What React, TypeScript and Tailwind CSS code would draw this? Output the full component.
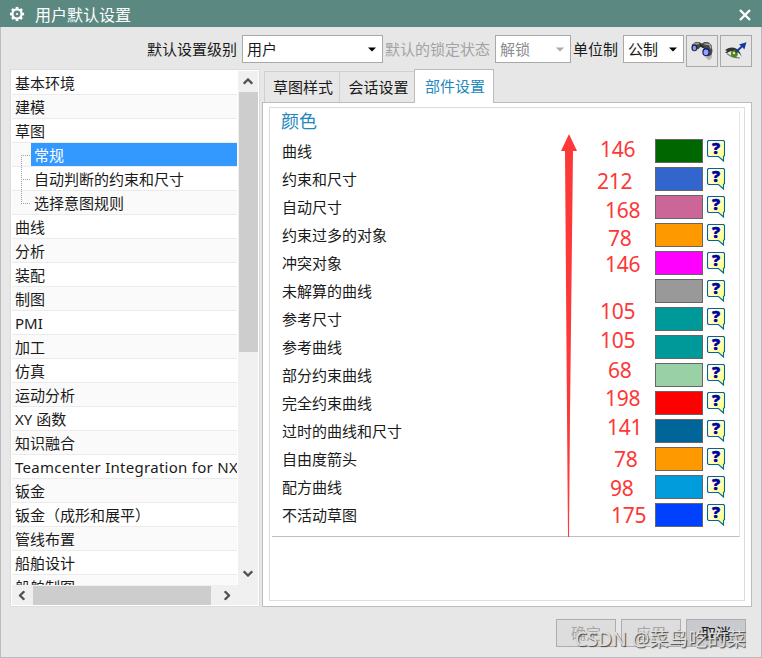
import React from "react";

const tree: { label: string; level?: number; selected?: boolean; wide?: boolean }[] = [
  { label: "基本环境" },
  { label: "建模" },
  { label: "草图" },
  { label: "常规", level: 1, selected: true },
  { label: "自动判断的约束和尺寸", level: 1 },
  { label: "选择意图规则", level: 1 },
  { label: "曲线" },
  { label: "分析" },
  { label: "装配" },
  { label: "制图" },
  { label: "PMI" },
  { label: "加工" },
  { label: "仿真" },
  { label: "运动分析" },
  { label: "XY 函数" },
  { label: "知识融合" },
  { label: "Teamcenter Integration for NX", wide: true },
  { label: "钣金" },
  { label: "钣金（成形和展平）" },
  { label: "管线布置" },
  { label: "船舶设计" },
  { label: "船舶制图" },
];

const colors = [
  { label: "曲线", swatch: "bg-[#006600]" },
  { label: "约束和尺寸", swatch: "bg-[#3366cc]" },
  { label: "自动尺寸", swatch: "bg-[#cc6699]" },
  { label: "约束过多的对象", swatch: "bg-[#ff9900]" },
  { label: "冲突对象", swatch: "bg-[#ff00ff]" },
  { label: "未解算的曲线", swatch: "bg-[#999999]" },
  { label: "参考尺寸", swatch: "bg-[#009999]" },
  { label: "参考曲线", swatch: "bg-[#009999]" },
  { label: "部分约束曲线", swatch: "bg-[#9ad0a6]" },
  { label: "完全约束曲线", swatch: "bg-[#ff0000]" },
  { label: "过时的曲线和尺寸", swatch: "bg-[#006699]" },
  { label: "自由度箭头", swatch: "bg-[#ff9900]" },
  { label: "配方曲线", swatch: "bg-[#009cdb]" },
  { label: "不活动草图", swatch: "bg-[#0040ff]" },
];

const notes = [
  { text: "146", x: 600, y: 149 },
  { text: "212", x: 597, y: 181 },
  { text: "168", x: 605, y: 210 },
  { text: "78", x: 608, y: 238 },
  { text: "146", x: 605, y: 264 },
  { text: "105", x: 600, y: 311 },
  { text: "105", x: 600, y: 340 },
  { text: "68", x: 608, y: 370 },
  { text: "198", x: 605, y: 398 },
  { text: "141", x: 607, y: 427 },
  { text: "78", x: 614, y: 459 },
  { text: "98", x: 610, y: 488 },
  { text: "175", x: 611, y: 515 },
];

function Gear() {
  return (
    <svg width="16" height="16" viewBox="0 0 16 16" className="text-white">
      <circle cx="8" cy="8" r="4.6" fill="none" stroke="currentColor" strokeWidth="2.3" />
      <circle cx="8" cy="8" r="1.1" fill="currentColor" />
      {[0, 45, 90, 135, 180, 225, 270, 315].map((a) => (
        <rect key={a} x="6.7" y="0.9" width="2.6" height="2.6" fill="currentColor" transform={`rotate(${a} 8 8)`} />
      ))}
    </svg>
  );
}

function Triangle({ className }: { className: string }) {
  return (
    <svg width="8" height="5" viewBox="0 0 8 5" className={className}>
      <path d="M0 0.5H8L4 4.5Z" fill="currentColor" />
    </svg>
  );
}

function Binoculars() {
  return (
    <svg width="24" height="20" viewBox="0 0 24 20">
      <path d="M9 10l5 5 5 4.5 3-3-1-4z" fill="#b4b4b4" />
      <path d="M1.5 4L5 1.2 9 1l3 1.5L14.500 1l4 .3L21.500 4l1 6-1 4-3.500 1.500z" fill="#474747" />
      <path d="M3 3.200L9 2.500M14.500 3l5 .5 1.500 4" stroke="#a5a5a5" strokeWidth="1.5" fill="none" />
      <path d="M7 9.500L11 5.500l3 2-1 6.500-3.500-1z" fill="#e2e2e2" />
      <path d="M10 4l3.500 2.500" stroke="#222" strokeWidth="1.6" />
      <ellipse cx="4.4" cy="6.8" rx="3" ry="3.5" fill="#25284a" />
      <ellipse cx="4.4" cy="7.100" rx="1.7" ry="2.3" fill="#829df6" />
      <ellipse cx="16" cy="11" rx="3.7" ry="4.100" fill="#141b70" />
      <ellipse cx="16" cy="11.200" rx="2.400" ry="2.800" fill="#8fa5ff" />
    </svg>
  );
}

function Eye() {
  return (
    <svg width="24" height="20" viewBox="0 0 24 20">
      <path d="M2.500 11.500q5-3 12 0l3 5-5 .5q-6-1-10-5.500z" fill="#ededed" />
      <path d="M1 9Q7 5 12 7.500q4 2 6 9-3-6-7-6.500Q6 9.500 3 12l-2 0 2-2z" fill="#343434" />
      <path d="M3 12.500q5 4.500 13 4.500" fill="none" stroke="#777" strokeWidth="1.2" />
      <circle cx="10.3" cy="12.800" r="3.5" fill="#4c871c" />
      <circle cx="10" cy="12" r="1.3" fill="#dce9a5" />
      <path d="M11.500 11.500L19 4.500" stroke="#163b9c" strokeWidth="1.9" />
      <path d="M15 3.500L22.500 1.200 20.300 8.500l-2-2.500z" fill="#1237a5" />
    </svg>
  );
}

function HelpIcon() {
  return (
    <svg width="19" height="24" viewBox="0 0 19 24">
      <defs>
        <linearGradient id="paper" x1="0" y1="0" x2="1" y2="1">
          <stop offset="0.2" stopColor="#ffffee" />
          <stop offset="1" stopColor="#ffff66" />
        </linearGradient>
      </defs>
      <path
        d="M1.5 1.5H16.5L17.5 2.5V16.5L16.5 17.5V22L11.5 17.5H1.5L.5 16.5V2.5Z"
        fill="url(#paper)"
        stroke="#00659c"
        strokeWidth="1.1"
      />
      <text x="9" y="14.6" textAnchor="middle" fontSize="16" fontWeight="800" fill="#0000a5" stroke="#0000a5" strokeWidth="0.4" fontFamily="Open Sans, sans-serif">
        ?
      </text>
    </svg>
  );
}

function Chevron({ className }: { className: string }) {
  return (
    <svg width="10" height="7" viewBox="0 0 10 7" className={className}>
      <path d="M0.7 5.8L5 1.5L9.3 5.8" fill="none" stroke="#505050" strokeWidth="2.3" />
    </svg>
  );
}

function Tree() {
  return (
    <aside className="flex h-[538px] w-[250px] shrink-0 flex-col border border-[#dcdcdc] bg-white p-px">
      <div className="flex h-[514px]">
        <div className="relative w-[225px] shrink-0 overflow-hidden">
          {tree.map((n, i) => (
            <div
              key={n.label}
              className={`flex h-6 border-b border-[#ebebeb] ${i % 2 ? "bg-[#fafafa]" : "bg-white"} ${n.level ? "pl-[19px]" : ""}`}
            >
              <div
                className={`h-[23px] w-full whitespace-nowrap pl-[3px] leading-[25px] ${n.selected ? "bg-[#3399ff] text-white" : ""} ${n.wide ? "tracking-[0.28px]" : ""}`}
              >
                {n.label}
              </div>
            </div>
          ))}
          <svg className="absolute left-[9px] top-[84px]" width="10" height="50" viewBox="0 0 10 50">
            <path d="M0.5 0V50M0 .5H10M0 24.5H10M0 48.5H10" stroke="#a0a0a0" strokeDasharray="1 1" fill="none" />
          </svg>
        </div>
        <div className="ml-px flex w-5 flex-col items-center bg-[#f0f0f0]">
          <div className="flex h-[21px] items-center">
            <Chevron className="-ml-px" />
          </div>
          <div className="h-[260px] w-[19px] bg-[#cdcdcd]" />
          <div className="mt-auto flex h-[24px] items-center">
            <Chevron className="-ml-px rotate-180" />
          </div>
        </div>
      </div>
      <div className="flex h-5 items-center bg-[#f0f0f0]">
        <div className="flex w-[21px] justify-center pr-[2px]">
          <Chevron className="-rotate-90" />
        </div>
        <div className="h-[19px] w-[178px] bg-[#cdcdcd]" />
        <div className="flex w-[31px] justify-center">
          <Chevron className="rotate-90" />
        </div>
      </div>
    </aside>
  );
}

export default function App() {
  return (
    <div className="relative flex h-[658px] w-[762px] flex-col overflow-hidden bg-[#e7e7e7] font-['Noto_Sans','Noto_Sans_CJK_SC',sans-serif] text-[15px] leading-5 text-[#1a1a1a]">
      <header className="flex h-[27px] shrink-0 items-center bg-[#5b8881] pl-[9px] pr-[11px] text-white">
        <Gear />
        <h1 className="ml-[10px] mt-[2px] text-[16px] leading-6">用户默认设置</h1>
        <svg className="ml-auto mt-[2px]" width="12" height="12" viewBox="0 0 12 12">
          <path d="M1 1L11 11M11 1L1 11" stroke="white" strokeWidth="2.4" />
        </svg>
      </header>
      <div className="flex flex-1 flex-col border-x border-b border-[#bcbcbc] pl-[9px] pt-2">
        <div className="flex h-[34px] items-start pl-[137px]">
          <span className="mt-1 w-[95px] whitespace-nowrap">默认设置级别</span>
          <div className="flex h-7 w-[141px] items-center justify-between border border-[#a9a9a9] bg-white pl-1 pr-[6px]">
            用户
            <Triangle className="text-black" />
          </div>
          <span className="ml-[2px] mt-1 w-[110px] whitespace-nowrap text-[#a3a3a3]">默认的锁定状态</span>
          <div className="flex h-7 w-[76px] items-center justify-between border border-[#a9a9a9] bg-white pl-1 pr-[6px] text-[#8c8c8c]">
            解锁
            <Triangle className="text-[#a9a9a9]" />
          </div>
          <span className="ml-[2px] mt-1 w-[50px] whitespace-nowrap">单位制</span>
          <div className="flex h-7 w-[61px] items-center justify-between border border-[#a9a9a9] bg-white pl-1 pr-[6px]">
            公制
            <Triangle className="text-black" />
          </div>
          <div className="ml-[2px] flex h-8 w-8 items-center justify-center border border-[#a9a9a9]">
            <Binoculars />
          </div>
          <div className="ml-[2px] flex h-8 w-8 items-center justify-center border border-[#a9a9a9]">
            <Eye />
          </div>
        </div>
        <main className="flex gap-[2px]">
          <Tree />
          <section className="w-[490px]">
            <nav className="relative flex h-[33px] items-end pl-[2px]">
              <div className="flex h-[31px] w-[76px] items-center justify-center border border-b-0 border-[#d0d0d0] pl-[2px]">
                草图样式
              </div>
              <div className="flex h-[31px] w-[75px] items-center justify-center border border-b-0 border-l-0 border-[#d0d0d0] pl-[3px]">
                会话设置
              </div>
              <div className="relative -mb-px -ml-px flex h-[34px] w-20 items-center justify-center border border-b-0 border-[#bcbcbc] bg-white pb-px pl-[2px] text-[#2288bb]">
                部件设置
              </div>
            </nav>
            <div className="h-[505px] border border-[#bcbcbc] bg-white px-[6px] pb-[5px] pt-1">
              <div className="h-[494px] border border-[#dcdcdc] pl-[2px] pt-[3px]">
                <div className="h-[426px] w-[468px] border-b border-r border-b-[#c0c0c0] border-r-[#e6e6e6]">
                  <h2 className="h-[27px] pl-[9px] text-[18px] leading-[21px] text-[#2288bb]">颜色</h2>
                  {colors.map((c) => (
                    <div key={c.label} className="flex h-7 items-start pl-[10px]">
                      <span className="mt-[3px] w-[373px]">{c.label}</span>
                      <div className={`mt-px h-6 w-12 border border-[#666666] ${c.swatch}`} />
                      <div className="ml-1 mt-px">
                        <HelpIcon />
                      </div>
                    </div>
                  ))}
                </div>
              </div>
            </div>
          </section>
        </main>
        <footer className="mt-3 flex gap-[5px] pl-[546px]">
          <div className="flex h-7 w-[60px] items-center justify-center border border-[#adadad] bg-[#dddddd] text-[#a6a6a6]">确定</div>
          <div className="flex h-7 w-[60px] items-center justify-center border border-[#adadad] bg-[#dddddd] text-[#a6a6a6]">应用</div>
          <div className="flex h-7 w-[60px] items-center justify-center border border-[#adadad] bg-[#c8cad0]">取消</div>
        </footer>
      </div>

      {/* Hand-made annotations laid over the dialog */}
      <svg className="absolute left-[560px] top-[134px]" width="18" height="404" viewBox="0 0 18 404">
        <path d="M9 0L17 17H13L10 280L9 403H8L7 280L5 17H1Z" fill="#fc3838" />
      </svg>
      {notes.map((n) => (
        <span
          key={n.y}
          className="absolute -translate-y-1/2 text-[21px] leading-6 tracking-[-0.3px] text-[#fc3838]"
          style={{ left: n.x, top: n.y }}
        >
          {n.text}
        </span>
      ))}
      <span className="absolute left-[575px] top-[627px] whitespace-nowrap text-[19px] leading-6 tracking-[0.3px] text-[#dedede] [text-shadow:1px_1px_1px_#444]">
        CSDN @菜鸟吃的菜
      </span>
    </div>
  );
}
